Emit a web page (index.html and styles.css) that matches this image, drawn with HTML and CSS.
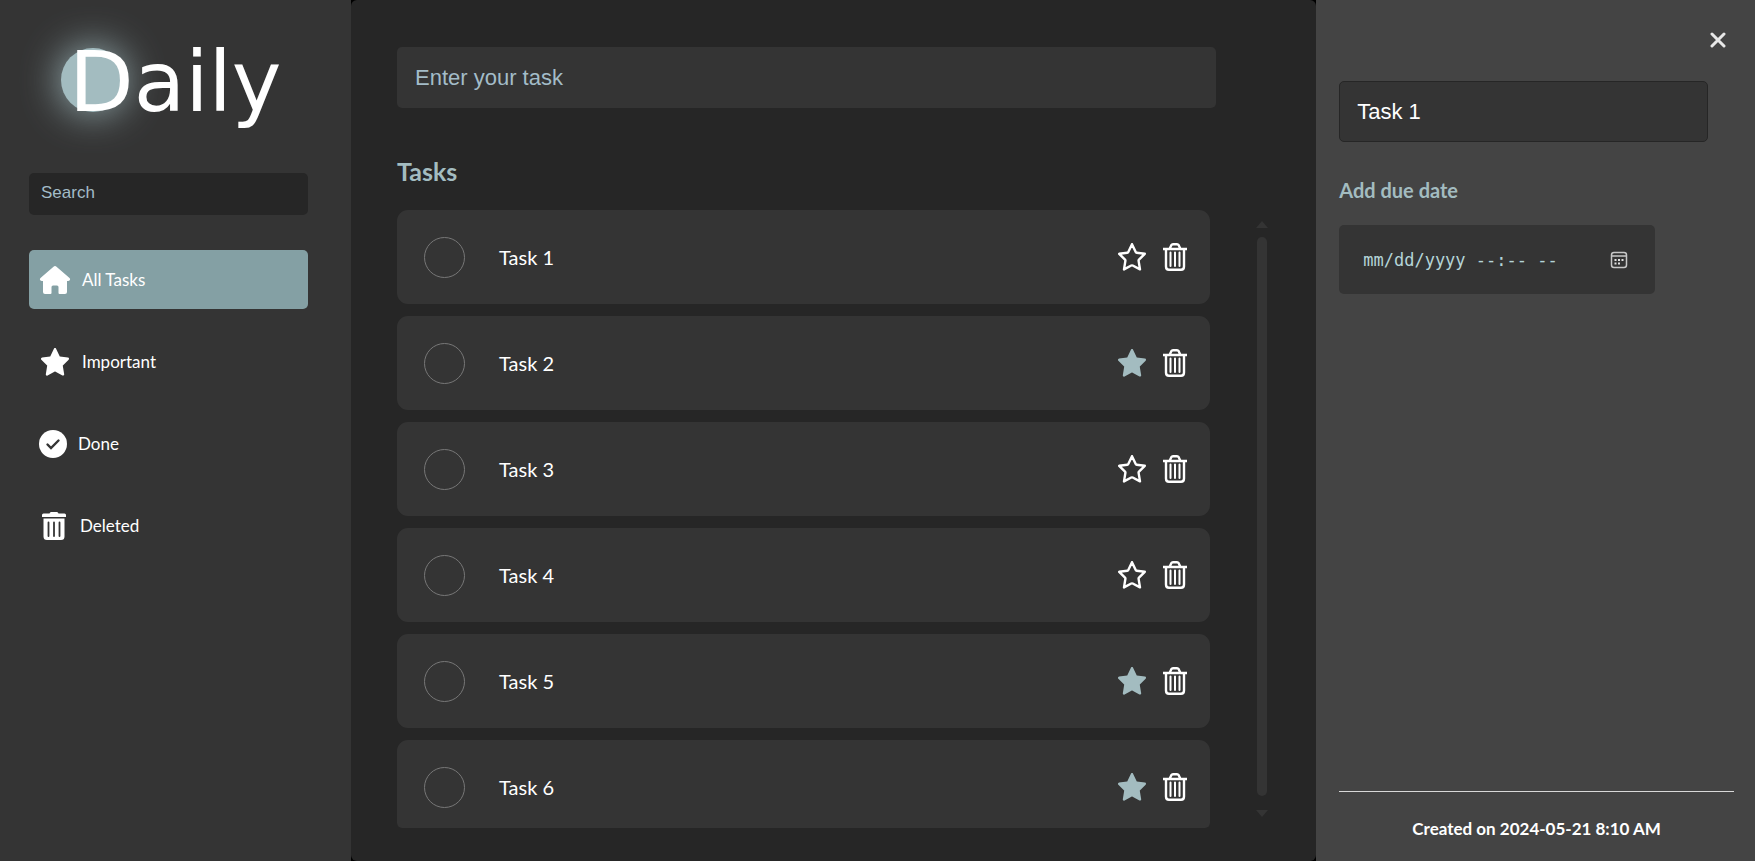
FILE: index.html
```html
<!DOCTYPE html>
<html lang="en">
<head>
<meta charset="utf-8">
<title>Daily</title>
<link rel="stylesheet" href="styles.css">
</head>
<body>
<svg class="sprite" aria-hidden="true">
  <symbol id="star" viewBox="0 0 28 28"><path d="M14 1.2 L17.7 9 Q18 9.6 18.7 9.7 L26.8 10.8 L21 16.6 Q20.5 17.1 20.6 17.8 L22 26.4 L14.7 22.5 Q14 22.2 13.300 22.500 L6 26.400 L7.400 17.800 Q7.500 17.100 7 16.600 L1.200 10.800 L9.300 9.700 Q10 9.600 10.300 9 Z" stroke-width="2.400" stroke-linejoin="round"/></symbol>
  <symbol id="bin" viewBox="0 0 24 28"><path d="M0 6H24 M3 6V23.500Q3 26.800 6 26.800H18Q21 26.800 21 23.500V6 M6.500 6L8.300 2.200Q8.900 1.200 10 1.200H14Q15.100 1.200 15.700 2.200L17.500 6" fill="none" stroke="#fff" stroke-width="2.400"/><path d="M7.500 9.500V23 M12 9.500V23 M16.500 9.500V23" stroke="#fff" stroke-width="2" stroke-linecap="round"/></symbol>
</svg>
<div class="app">
  <aside class="sidebar">
    <h1 class="logo">Daily</h1>
    <input class="search" type="search" placeholder="Search" aria-label="Search">
    <nav class="nav">
      <a class="nav-link active" href="#all"><svg width="32" height="30" viewBox="0 0 32 30"><path d="M14.500 1.700Q16 .4 17.500 1.700L30.500 13Q31.600 14 30.900 15.100Q30.300 16 29 16H28V27Q28 29 26 29H20.500Q19.500 29 19.500 28V22Q19.500 20.500 18 20.500H14Q12.500 20.500 12.500 22V28Q12.500 29 11.500 29H6Q4 29 4 27V16H3Q1.700 16 1.100 15.100Q.4 14 1.500 13Z" fill="#fff"/></svg>All Tasks</a>
      <a class="nav-link" href="#important"><svg class="star-white" width="32" height="30" viewBox="0 0 32 30"><use href="#star" x="2" y="1" width="28" height="28"/></svg>Important</a>
      <a class="nav-link" href="#done"><svg width="28" height="28" viewBox="0 0 28 28"><circle cx="14" cy="14" r="14" fill="#fff"/><path d="M8.500 14.500L12 18L19.500 10.500" fill="none" stroke="#343434" stroke-width="2.400" stroke-linecap="round"/></svg>Done</a>
      <a class="nav-link" href="#deleted"><svg width="30" height="28" viewBox="0 0 30 28"><path d="M4.500 1.500H10.500Q11 0 12 0H18Q19 0 19.500 1.500H25.500Q27 1.500 27 3V5H3V3Q3 1.500 4.500 1.500Z M4.500 6.500H25.500V24.500Q25.500 28 22 28H8Q4.500 28 4.500 24.500Z" fill="#fff"/><path d="M9.500 10.500V24 M15 10.500V24 M20.500 10.500V24" stroke="#343434" stroke-width="1.800" stroke-linecap="round"/></svg>Deleted</a>
    </nav>
  </aside>

  <main class="main">
    <input class="new-task" type="text" placeholder="Enter your task" aria-label="Enter your task">
    <h2 class="heading">Tasks</h2>
    <div class="list-wrap">
      <ul class="list">
        <li class="task"><input class="check" type="checkbox" id="t1"><label class="name" for="t1">Task 1</label><button class="icon-btn" aria-label="Mark important"><svg class="star-line"><use href="#star"/></svg></button><button class="icon-btn" aria-label="Delete"><svg class="bin"><use href="#bin"/></svg></button></li>
        <li class="task"><input class="check" type="checkbox" id="t2"><label class="name" for="t2">Task 2</label><button class="icon-btn" aria-label="Unmark important"><svg class="star-full"><use href="#star"/></svg></button><button class="icon-btn" aria-label="Delete"><svg class="bin"><use href="#bin"/></svg></button></li>
        <li class="task"><input class="check" type="checkbox" id="t3"><label class="name" for="t3">Task 3</label><button class="icon-btn" aria-label="Mark important"><svg class="star-line"><use href="#star"/></svg></button><button class="icon-btn" aria-label="Delete"><svg class="bin"><use href="#bin"/></svg></button></li>
        <li class="task"><input class="check" type="checkbox" id="t4"><label class="name" for="t4">Task 4</label><button class="icon-btn" aria-label="Mark important"><svg class="star-line"><use href="#star"/></svg></button><button class="icon-btn" aria-label="Delete"><svg class="bin"><use href="#bin"/></svg></button></li>
        <li class="task"><input class="check" type="checkbox" id="t5"><label class="name" for="t5">Task 5</label><button class="icon-btn" aria-label="Unmark important"><svg class="star-full"><use href="#star"/></svg></button><button class="icon-btn" aria-label="Delete"><svg class="bin"><use href="#bin"/></svg></button></li>
        <li class="task"><input class="check" type="checkbox" id="t6"><label class="name" for="t6">Task 6</label><button class="icon-btn" aria-label="Unmark important"><svg class="star-full"><use href="#star"/></svg></button><button class="icon-btn" aria-label="Delete"><svg class="bin"><use href="#bin"/></svg></button></li>
      </ul>
      <div class="scrollbar" aria-hidden="true">
        <svg width="12" height="7" viewBox="0 0 12 7"><path d="M0 7L6 0L12 7Z" fill="#343434"/></svg>
        <div class="thumb"></div>
        <svg width="12" height="7" viewBox="0 0 12 7"><path d="M0 0L6 7L12 0Z" fill="#343434"/></svg>
      </div>
    </div>
  </main>

  <aside class="panel">
    <button class="close" aria-label="Close"><svg width="16" height="16" viewBox="0 0 16 16"><path d="M2 2L14 14M14 2L2 14" stroke="#e8e8e8" stroke-width="3" stroke-linecap="round"/></svg></button>
    <input class="title" type="text" value="Task 1" aria-label="Task name">
    <label class="due-label" for="due">Add due date</label>
    <div class="due">
      <input class="due-input" id="due" type="text" placeholder="mm/dd/yyyy --:-- --">
      <button class="icon-btn" aria-label="Open calendar"><svg width="18" height="18" viewBox="0 0 18 18"><rect x="1.500" y="1.500" width="15" height="15" rx="2.500" fill="none" stroke="#c8c8c8" stroke-width="1.500"/><path d="M1.500 5H16.500" stroke="#c8c8c8" stroke-width="1.500"/><path d="M4.500 9h2M8 9h2M11.500 9h2M4.500 12.500h2M8 12.500h2" stroke="#e0e0e0" stroke-width="2"/></svg></button>
    </div>
    <footer class="created">Created on 2024-05-21 8:10 AM</footer>
  </aside>
</div>
</body>
</html>
```
FILE: styles.css
```css
* { box-sizing: border-box; }

body {
  margin: 0;
  background: #000;
  color: #fff;
  font-family: Lato, "Liberation Sans", sans-serif;
}

button {
  padding: 0;
  border: 0;
  background: none;
  cursor: pointer;
}

.sprite { position: absolute; width: 0; height: 0; }

.app {
  display: grid;
  grid-template-columns: 20fr 55fr 25fr;
  grid-template-rows: minmax(0, 1fr);
  height: 100vh;
}

.sidebar {
  background: #343434;
  padding: 32px 43px 0 29px;
}

.logo {
  position: relative;
  z-index: 0;
  margin: 0 0 41px;
  padding-left: 40px;
  font: 400 84px/100px "DejaVu Sans", sans-serif;
}

.logo::before {
  content: "";
  position: absolute;
  z-index: -1;
  left: 32px;
  top: 16px;
  width: 64px;
  height: 64px;
  border-radius: 50%;
  background: #a3bcc0;
  box-shadow: 0 0 40px #a3bcc0;
}

input { outline: 0; }
input::placeholder { color: #a3bcc8; opacity: 1; }

.search {
  display: block;
  width: 100%;
  height: 42px;
  padding: 0 12px 2px;
  border: 0;
  border-radius: 5px;
  background: #262626;
  color: #fff;
  font: 17px "Liberation Sans", sans-serif;
}

.nav {
  display: grid;
  gap: 23px;
  margin-top: 35px;
}

.nav-link {
  display: flex;
  align-items: center;
  gap: 11px;
  height: 59px;
  padding: 0 10px;
  border-radius: 5px;
  color: #fff;
  font-size: 17px;
  text-decoration: none;
}

.active { background: #84a0a4; }
.star-white, .star-line, .star-full { fill: #fff; stroke: #fff; }
.star-line { fill: none; }
.star-full { fill: #a3bcc0; stroke: #a3bcc0; }

.main {
  display: flex;
  flex-direction: column;
  min-width: 0;
  padding: 47px 48px 33px 46px;
  border-radius: 6px;
  background: #262626;
}

.new-task, .title {
  flex: none;
  height: 61px;
  padding: 0 18px;
  border: 0;
  border-radius: 5px;
  background: #343434;
  color: #fff;
  font: 22px "Liberation Sans", sans-serif;
}

.new-task { margin-right: 52px; }

.heading {
  margin: 48px 0 24px;
  color: #a3bcc0;
  font-size: 25px;
  line-height: 30px;
}

.list-wrap {
  display: flex;
  flex: 1;
  min-height: 0;
  justify-content: space-between;
}

.list {
  flex: 1;
  display: flex;
  flex-direction: column;
  gap: 12px;
  margin: 0;
  padding: 0;
  overflow: hidden;
  border-radius: 5px;
  list-style: none;
}

.task {
  flex: none;
  display: flex;
  align-items: center;
  height: 94px;
  padding: 0 23px 0 27px;
  border-radius: 11px;
  background: #343434;
}

.check {
  appearance: none;
  width: 41px;
  height: 41px;
  margin: 0 34px 0 0;
  border: 1px solid #777;
  border-radius: 50%;
}

.name { flex: 1; font-size: 20px; }
.icon-btn { display: flex; color: #fff; }
.star-line, .star-full { width: 28px; height: 28px; margin-right: 17px; }
.bin { width: 24px; height: 28px; }

.scrollbar {
  display: flex;
  flex-direction: column;
  align-items: center;
  justify-content: space-between;
  width: 12px;
  margin-left: 46px;
  padding: 11px 0;
}

.thumb {
  flex: 1;
  width: 10px;
  margin: 9px 0 14px;
  border-radius: 5px;
  background: #343434;
}

.panel {
  display: flex;
  flex-direction: column;
  padding: 32px 21px 20px 23px;
  background: #444;
}

.close {
  display: flex;
  align-self: flex-end;
  margin: 0 8px 33px;
}

.title {
  margin-right: 26px;
  padding: 0 17px;
  border: 1px solid #262626;
}

.due-label {
  margin: 36px 0 23px;
  color: #a3bcc0;
  font-size: 20px;
  font-weight: 700;
  line-height: 24px;
}

.due {
  display: flex;
  align-items: center;
  justify-content: space-between;
  align-self: flex-start;
  width: 80%;
  height: 69px;
  padding: 0 27px 0 24px;
  border-radius: 5px;
  background: #343434;
}

.due-input {
  flex: 1;
  min-width: 0;
  padding: 0;
  border: 0;
  background: none;
  color: #b4d4d8;
  font: 17px "DejaVu Sans Mono", monospace;
}

.due-input::placeholder { color: #b4d4d8; }

.created {
  margin-top: auto;
  padding-top: 25px;
  border-top: 1px solid #d8d8d8;
  font-size: 17px;
  font-weight: 700;
  line-height: 24px;
  text-align: center;
}
```
